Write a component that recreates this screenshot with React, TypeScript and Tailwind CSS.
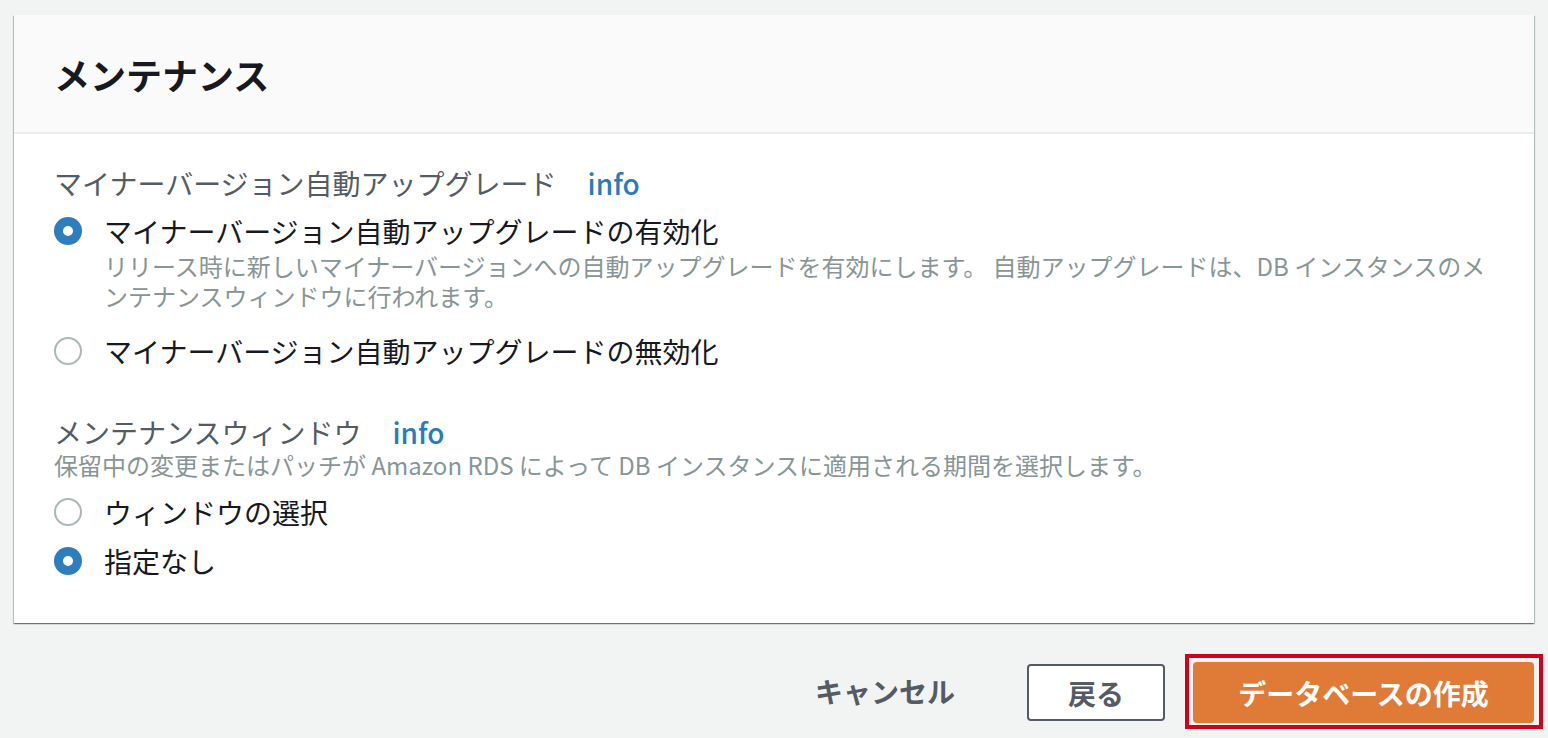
import React from "react";

const font = { fontFamily: '"Noto Sans CJK JP", "Noto Sans", sans-serif' };

function Radio({ checked }: { checked: boolean }) {
  return checked ? (
    <div className="w-[28px] h-[28px] rounded-full bg-[#2e7dbd] flex items-center justify-center shrink-0">
      <div className="w-[10px] h-[10px] rounded-full bg-white" />
    </div>
  ) : (
    <div className="w-[28px] h-[28px] rounded-full border-2 border-[#aab7b8] bg-white shrink-0" />
  );
}

function Option({ checked, label, className = "" }: { checked: boolean; label: string; className?: string }) {
  return (
    <div className={`flex items-center ${className}`}>
      <Radio checked={checked} />
      <span className="ml-[22px] text-[28px] leading-[40px] text-[#16191f]">{label}</span>
    </div>
  );
}

export default function App() {
  return (
    <div className="w-[1548px] h-[738px] bg-[#f2f3f3] overflow-hidden" style={font}>
      <div className="pt-[15px] pl-[14px] pr-[14px]">
        <div className="bg-white shadow-[0_1px_1px_0_rgba(0,28,36,0.35),1px_1px_1px_0_rgba(0,28,36,0.2),-1px_1px_1px_0_rgba(0,28,36,0.2)]">
          <div className="h-[119px] bg-[#fafafa] border-b-2 border-[#eaeded] flex items-center pl-[40px]">
            <h2 className="text-[36px] font-bold text-[#16191f] leading-[44px]">メンテナンス</h2>
          </div>
          <div className="pl-[40px] pt-[29px] pb-[42px]">
            <div className="flex items-center text-[28px] leading-[40px]">
              <span className="text-[#545b64]">マイナーバージョン自動アップグレード</span>
              <span className="ml-[31px] text-[#2a7bbd] font-medium">info</span>
            </div>
            <Option className="mt-[8px]" checked={true} label="マイナーバージョン自動アップグレードの有効化" />
            <div className="pl-[50px] text-[24px] leading-[30px] text-[#879596] whitespace-nowrap">
              リリース時に新しいマイナーバージョンへの自動アップグレードを有効にします。 自動アップグレードは、DB インスタンスのメ
              <br />
              ンテナンスウィンドウに行われます。
            </div>
            <Option className="mt-[20px]" checked={false} label="マイナーバージョン自動アップグレードの無効化" />
            <div className="mt-[43px] flex items-center text-[28px] leading-[36px]">
              <span className="text-[#545b64]">メンテナンスウィンドウ</span>
              <span className="ml-[31px] text-[#2a7bbd] font-medium">info</span>
            </div>
            <div className="text-[24px] leading-[30px] text-[#879596] whitespace-nowrap">
              保留中の変更またはパッチが Amazon RDS によって DB インスタンスに適用される期間を選択します。
            </div>
            <Option className="mt-[12px]" checked={false} label="ウィンドウの選択" />
            <Option className="mt-[9px]" checked={true} label="指定なし" />
          </div>
        </div>
      </div>
      <div className="mt-[31px] flex justify-end items-start pr-[5px]">
        <button className="mt-[8px] h-[57px] text-[28px] font-bold text-[#545b64]">キャンセル</button>
        <button className="ml-[72px] mt-[10px] w-[138px] h-[57px] border-2 border-[#545b64] rounded-[4px] bg-white text-[28px] font-bold text-[#545b64]">
          戻る
        </button>
        <div className="ml-[20px] border-4 border-[#d0021b] pt-[4px] pl-[4px] pr-[5px] pb-[2px]">
          <button className="w-[341px] h-[61px] rounded-[4px] bg-[#e07b37] text-[28px] font-bold text-white">
            データベースの作成
          </button>
        </div>
      </div>
    </div>
  );
}
